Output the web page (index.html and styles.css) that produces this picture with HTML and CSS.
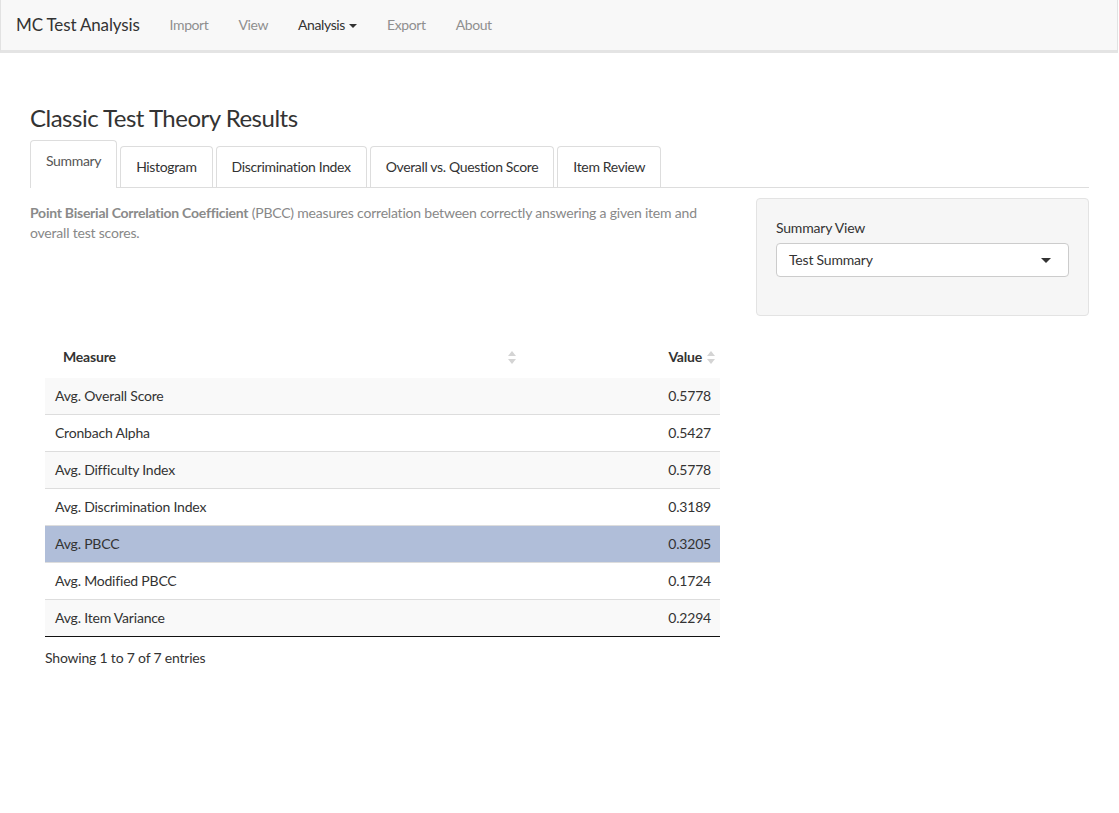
FILE: index.html
```html
<!DOCTYPE html>
<html>
<head>
<meta charset="utf-8">
<title>MC Test Analysis</title>
<link rel="stylesheet" href="styles.css">
</head>
<body>
<nav class="navbar">
  <span class="brand">MC Test Analysis</span>
  <ul class="nav">
    <li><a class="nav-link">Import</a></li>
    <li><a class="nav-link">View</a></li>
    <li><a class="nav-link active">Analysis <span class="caret"></span></a></li>
    <li><a class="nav-link">Export</a></li>
    <li><a class="nav-link">About</a></li>
  </ul>
</nav>

<main class="page">
  <h2 class="title">Classic Test Theory Results</h2>
  <ul class="tabs">
    <li class="tab tab-active">Summary</li>
    <li class="tab">Histogram</li>
    <li class="tab">Discrimination Index</li>
    <li class="tab">Overall vs. Question Score</li>
    <li class="tab">Item Review</li>
  </ul>

  <div class="tab-content">
    <div class="row">
      <div class="col-main">
        <p class="desc"><strong class="term">Point Biserial Correlation Coefficient</strong> (PBCC) measures correlation between correctly answering a given item and overall test scores.</p>
      </div>
      <div class="col-side">
        <div class="well">
          <div class="form-group">
            <label class="label">Summary View</label>
            <div class="select">
              <span>Test Summary</span>
              <span class="select-caret"></span>
            </div>
          </div>
        </div>
      </div>
    </div>

    <div class="table-wrap">
      <table class="dt">
        <thead>
          <tr>
            <th class="th-left">Measure<svg class="sort" viewBox="0 0 8 14" width="8" height="14"><polygon points="4,0 8,5 0,5" fill="#d4d4d4"/><polygon points="0,8 8,8 4,13" fill="#d4d4d4"/></svg></th>
            <th class="th-right">Value<svg class="sort" viewBox="0 0 8 14" width="8" height="14"><polygon points="4,0 8,5 0,5" fill="#d4d4d4"/><polygon points="0,8 8,8 4,13" fill="#d4d4d4"/></svg></th>
          </tr>
        </thead>
        <tbody>
          <tr class="odd"><td>Avg. Overall Score</td><td class="num">0.5778</td></tr>
          <tr><td>Cronbach Alpha</td><td class="num">0.5427</td></tr>
          <tr class="odd"><td>Avg. Difficulty Index</td><td class="num">0.5778</td></tr>
          <tr><td>Avg. Discrimination Index</td><td class="num">0.3189</td></tr>
          <tr class="selected"><td>Avg. PBCC</td><td class="num">0.3205</td></tr>
          <tr><td>Avg. Modified PBCC</td><td class="num">0.1724</td></tr>
          <tr class="odd last"><td>Avg. Item Variance</td><td class="num">0.2294</td></tr>
        </tbody>
      </table>
      <div class="info">Showing 1 to 7 of 7 entries</div>
    </div>
  </div>
</main>
</body>
</html>
```

FILE: styles.css
```css
* { box-sizing: border-box; }

html, body {
  margin: 0;
  padding: 0;
  background: #fff;
}

body {
  font-family: Lato, "Open Sans", sans-serif;
  font-size: 14px;
  line-height: 20px;
  letter-spacing: -0.2px;
  color: #333;
}

/* Navbar */
.navbar {
  display: flex;
  align-items: center;
  height: 53px;
  width: 1118px;
  background: #f8f8f8;
  border-left: 1px solid #e2e2e2;
  border-right: 1px solid #e2e2e2;
  border-bottom: 3px solid #e4e4e4;
}

.brand {
  font-size: 17px;
  letter-spacing: -0.15px;
  line-height: 20px;
  color: #333;
  padding: 15px 15px;
}

.nav {
  display: flex;
  list-style: none;
  margin: 0;
  padding: 0;
}

.nav-link {
  display: block;
  padding: 15px 15px;
  color: #8f8f8f;
  line-height: 20px;
  font-size: 14px;
  letter-spacing: -0.4px;
}

.nav-link.active {
  color: #333;
}

.caret {
  display: inline-block;
  width: 0;
  height: 0;
  margin-left: 1px;
  vertical-align: middle;
  border-top: 4px solid #333;
  border-left: 4px solid transparent;
  border-right: 4px solid transparent;
}

/* Page */
.page {
  padding: 0 30px;
}

.title {
  font-size: 24px;
  font-weight: 400;
  letter-spacing: -0.5px;
  line-height: 28px;
  margin: 51px 0 8px;
  color: #333;
}

.tabs {
  display: flex;
  align-items: flex-end;
  gap: 3px;
  list-style: none;
  margin: 0;
  padding: 0;
  border-bottom: 1px solid #dddddd;
}

.tab {
  padding: 10px 15px;
  line-height: 20px;
  border: 1px solid #dddddd;
  border-bottom: none;
  border-radius: 4px 4px 0 0;
  margin-bottom: 0;
  color: #333;
  background: #fff;
  letter-spacing: -0.35px;
}

.tab-active {
  padding: 10px 15px 16px;
  color: #555;
  margin-bottom: -1px;
  height: 48px;
}

.tab-content {
  padding-top: 10px;
}

.row {
  display: flex;
}

.col-main {
  width: 695px;
}

.col-side {
  flex: 1;
  padding-left: 31px;
}

.desc {
  margin: 5px 0 0;
  color: #888;
}

.term {
  color: #8a8a8a;
  font-weight: 700;
  letter-spacing: -0.25px;
}

.well {
  background: #f6f6f6;
  border: 1px solid #e3e3e3;
  border-radius: 4px;
  padding: 19px 19px;
}

.form-group {
  margin-bottom: 19px;
}

.label {
  display: block;
  color: #333;
  margin-bottom: 5px;
}

.select {
  display: flex;
  align-items: center;
  justify-content: space-between;
  height: 34px;
  padding: 0 17px 0 12px;
  background: #fff;
  border: 1px solid #cccccc;
  border-radius: 4px;
  color: #333;
}

.select-caret {
  width: 0;
  height: 0;
  border-top: 5px solid #333;
  border-left: 5px solid transparent;
  border-right: 5px solid transparent;
}

/* Table */
.table-wrap {
  margin-top: 21px;
  padding-left: 15px;
  width: 690px;
}

.dt {
  width: 675px;
  border-collapse: collapse;
}

.dt th {
  position: relative;
  font-weight: 700;
  padding: 10px 18px 11px;
  line-height: 20px;
  color: #333;
}

.th-left {
  text-align: left;
  width: 476px;
}

.th-right {
  text-align: right;
}

.sort {
  position: absolute;
  right: 5px;
  top: 14px;
}

.dt td {
  padding: 8px 9px 8px 10px;
  line-height: 20px;
  border-bottom: 1px solid #dddddd;
}

.dt tr.odd td {
  background: #f9f9f9;
}

.dt tr.selected td {
  background: #b0bed9;
}

.dt tr.last td {
  border-bottom: 1px solid #111;
}

.dt td.num {
  text-align: right;
}

.info {
  padding-top: 11px;
  color: #333;
}
```
